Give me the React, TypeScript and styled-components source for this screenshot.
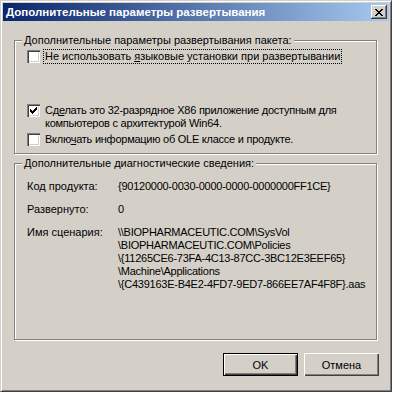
import React from "react";
import styled, { createGlobalStyle } from "styled-components";

const Global = createGlobalStyle`
  html, body { margin: 0; padding: 0; background: #ffffff; }
  body {
    font-family: "Liberation Sans", Arial, sans-serif;
    font-size: 11px;
    color: #000;
  }
`;

const Window = styled.div`
  width: 392px;
  height: 392px;
  box-sizing: border-box;
  background: #d4d0c8;
  border: 1px solid;
  border-color: #d4d0c8 #404040 #404040 #d4d0c8;
  box-shadow: inset 1px 1px 0 #ffffff, inset -1px -1px 0 #808080;
  padding: 2px;
  display: flex;
  flex-direction: column;
`;

const TitleBar = styled.div`
  height: 18px;
  flex: none;
  background: linear-gradient(to right, #0a246a, #a6caf0);
  display: flex;
  align-items: center;
  padding: 0 2px 0 3px;
  color: #ffffff;
  font-weight: bold;
  font-size: 11.5px;
`;

const TitleText = styled.span`
  flex: 1;
  white-space: nowrap;
`;

const CloseButton = styled.div`
  width: 16px;
  height: 14px;
  box-sizing: border-box;
  background: #d4d0c8;
  box-shadow: inset -1px -1px 0 #404040, inset 1px 1px 0 #ffffff,
    inset -2px -2px 0 #808080;
  display: flex;
  align-items: center;
  justify-content: center;
`;

const Body = styled.div`
  flex: 1;
  display: flex;
  flex-direction: column;
  padding: 19px 12px 0 11px;
`;

const GroupBox = styled.div<{ $height: number; $top?: number }>`
  position: relative;
  box-sizing: border-box;
  height: ${(p) => p.$height}px;
  margin-top: ${(p) => p.$top ?? 0}px;
  border: 1px solid #808080;
  box-shadow: inset 1px 1px 0 #ffffff, 1px 1px 0 #ffffff;
  padding: 0 12px;
  display: flex;
  flex-direction: column;
`;

const GroupTitle = styled.div`
  position: absolute;
  top: -7px;
  left: 7px;
  padding: 0 2px;
  line-height: 13px;
  background: #d4d0c8;
  white-space: nowrap;
`;

const CheckRow = styled.div<{ $top: number }>`
  display: flex;
  align-items: flex-start;
  margin-top: ${(p) => p.$top}px;
  gap: 4px;
`;

const CheckBox = styled.div`
  width: 13px;
  height: 13px;
  flex: none;
  box-sizing: border-box;
  background: #ffffff;
  box-shadow: inset 1px 1px 0 #808080, inset 2px 2px 0 #404040,
    inset -1px -1px 0 #ffffff, inset -2px -2px 0 #d4d0c8;
  display: flex;
  align-items: center;
  justify-content: center;
`;

const CheckLabel = styled.div<{ $focused?: boolean; $tight?: boolean }>`
  line-height: 13px;
  padding: 0 1px;
  white-space: nowrap;
  letter-spacing: ${(p) => (p.$tight ? "-0.25px" : "0")};
  outline: ${(p) => (p.$focused ? "1px dotted #000" : "none")};
  outline-offset: 0;
`;

const U = styled.span`
  text-decoration: underline;
`;

const InfoGrid = styled.div`
  display: grid;
  grid-template-columns: 91px 1fr;
  row-gap: 10px;
  margin-top: 16px;
  line-height: 13px;
`;

const InfoLabel = styled.div``;
const InfoValue = styled.div`
  white-space: nowrap;
  letter-spacing: -0.25px;
`;

const ButtonRow = styled.div`
  display: flex;
  justify-content: flex-end;
  gap: 6px;
  margin-top: 13px;
  margin-right: -2px;
`;

const Button = styled.div<{ $default?: boolean }>`
  width: 75px;
  height: 23px;
  box-sizing: border-box;
  background: #d4d0c8;
  display: flex;
  align-items: center;
  justify-content: center;
  border: ${(p) => (p.$default ? "1px solid #000" : "none")};
  box-shadow: inset 1px 1px 0 #ffffff, inset -1px -1px 0 #404040,
    inset -2px -2px 0 #808080;
`;

const Check = () => (
  <svg width="7" height="7" viewBox="0 0 7 7" shapeRendering="crispEdges">
    <path
      d="M0 2h1v1h1v1h1v-1h1v-1h1v-1h1v-1h1v3h-1v1h-1v1h-1v1h-1v1h-1v-1h-1v-1h-1z"
      fill="#000"
    />
  </svg>
);

const CloseGlyph = () => (
  <svg width="8" height="7" viewBox="0 0 8 7" shapeRendering="crispEdges">
    <path
      d="M0 0h2v1h1v1h2v-1h1v-1h2v1h-1v1h-1v1h-1v1h1v1h1v1h1v1h-2v-1h-1v-1h-2v1h-1v1h-2v-1h1v-1h1v-1h1v-1h-1v-1h-1v-1h-1z"
      fill="#000"
    />
  </svg>
);

export default function App() {
  return (
    <>
      <Global />
      <Window>
        <TitleBar>
          <TitleText>Дополнительные параметры развертывания</TitleText>
          <CloseButton>
            <CloseGlyph />
          </CloseButton>
        </TitleBar>
        <Body>
          <GroupBox $height={114}>
            <GroupTitle>Дополнительные параметры развертывания пакета:</GroupTitle>
            <CheckRow $top={9}>
              <CheckBox />
              <CheckLabel $focused>
                Не использовать <U>я</U>зыковые установки при развертывании
              </CheckLabel>
            </CheckRow>
            <CheckRow $top={41}>
              <CheckBox>
                <Check />
              </CheckBox>
              <CheckLabel $tight>
                Сд<U>е</U>лать это 32-разрядное X86 приложение доступным для
                <br />
                компьютеров с архитектурой Win64.
              </CheckLabel>
            </CheckRow>
            <CheckRow $top={3}>
              <CheckBox />
              <CheckLabel $tight>
                Вклю<U>ч</U>ать информацию об OLE классе и продукте.
              </CheckLabel>
            </CheckRow>
          </GroupBox>
          <GroupBox $height={177} $top={9}>
            <GroupTitle>Дополнительные диагностические сведения:</GroupTitle>
            <InfoGrid>
              <InfoLabel>Код продукта:</InfoLabel>
              <InfoValue>{"{90120000-0030-0000-0000-0000000FF1CE}"}</InfoValue>
              <InfoLabel>Развернуто:</InfoLabel>
              <InfoValue>0</InfoValue>
              <InfoLabel>Имя сценария:</InfoLabel>
              <InfoValue>
                \\BIOPHARMACEUTIC.COM\SysVol
                <br />
                \BIOPHARMACEUTIC.COM\Policies
                <br />
                {"\\{11265CE6-73FA-4C13-87CC-3BC12E3EEF65}"}
                <br />
                \Machine\Applications
                <br />
                {"\\{C439163E-B4E2-4FD7-9ED7-866EE7AF4F8F}.aas"}
              </InfoValue>
            </InfoGrid>
          </GroupBox>
          <ButtonRow>
            <Button $default>OK</Button>
            <Button>Отмена</Button>
          </ButtonRow>
        </Body>
      </Window>
    </>
  );
}
